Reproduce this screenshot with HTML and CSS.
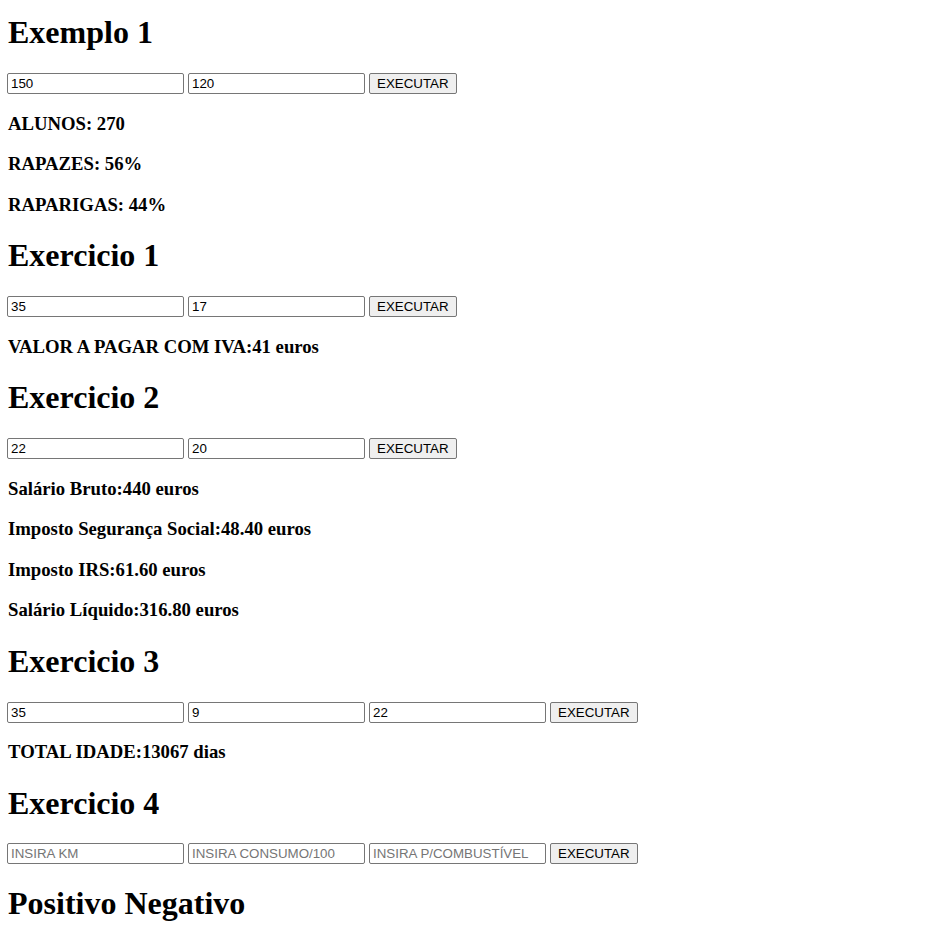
FILE: index.html
```html
<!DOCTYPE html>
<html lang="pt">
<head>
<meta charset="utf-8">
<title>Exercicios</title>
<link rel="stylesheet" href="styles.css">
</head>
<body>
  <section class="block">
    <h1 class="title first">Exemplo 1</h1>
    <div class="row">
      <input class="field" type="text" value="150">
      <input class="field" type="text" value="120">
      <button class="btn" type="button">EXECUTAR</button>
    </div>
    <div class="results">
      <h3 class="result">ALUNOS: 270</h3>
      <h3 class="result">RAPAZES: 56%</h3>
      <h3 class="result">RAPARIGAS: 44%</h3>
    </div>
  </section>

  <section class="block">
    <h1 class="title">Exercicio 1</h1>
    <div class="row">
      <input class="field" type="text" value="35">
      <input class="field" type="text" value="17">
      <button class="btn" type="button">EXECUTAR</button>
    </div>
    <div class="results">
      <h3 class="result">VALOR A PAGAR COM IVA:41 euros</h3>
    </div>
  </section>

  <section class="block">
    <h1 class="title">Exercicio 2</h1>
    <div class="row">
      <input class="field" type="text" value="22">
      <input class="field" type="text" value="20">
      <button class="btn" type="button">EXECUTAR</button>
    </div>
    <div class="results">
      <h3 class="result">Salário Bruto:440 euros</h3>
      <h3 class="result">Imposto Segurança Social:48.40 euros</h3>
      <h3 class="result">Imposto IRS:61.60 euros</h3>
      <h3 class="result">Salário Líquido:316.80 euros</h3>
    </div>
  </section>

  <section class="block">
    <h1 class="title">Exercicio 3</h1>
    <div class="row">
      <input class="field" type="text" value="35">
      <input class="field" type="text" value="9">
      <input class="field" type="text" value="22">
      <button class="btn" type="button">EXECUTAR</button>
    </div>
    <div class="results">
      <h3 class="result">TOTAL IDADE:13067 dias</h3>
    </div>
  </section>

  <section class="block">
    <h1 class="title">Exercicio 4</h1>
    <div class="row">
      <input class="field" type="text" placeholder="INSIRA KM">
      <input class="field" type="text" placeholder="INSIRA CONSUMO/100">
      <input class="field" type="text" placeholder="INSIRA P/COMBUSTÍVEL">
      <button class="btn" type="button">EXECUTAR</button>
    </div>
  </section>

  <section class="block">
    <h1 class="title last">Positivo Negativo</h1>
  </section>
</body>
</html>
```

FILE: styles.css
```css
html, body {
  background: #ffffff;
}

body {
  margin: 0 8px 0 7px;
  padding: 0;
  font-family: "Liberation Serif", "Times New Roman", serif;
  font-size: 16px;
  color: #000000;
}

.block {
  display: block;
}

.title {
  font-family: "Liberation Serif", "Times New Roman", serif;
  font-size: 32px;
  font-weight: bold;
  line-height: normal;
  margin: 21.7px 0 21.6px 1px;
}

.title.first {
  margin-top: 14.4px;
}

.title.last {
  margin-top: 21px;
}

.row {
  display: flex;
  align-items: flex-start;
  gap: 4px;
  height: 21px;
}

.field {
  box-sizing: border-box;
  width: 177px;
  height: 21px;
  margin: 0;
  padding: 1px 3px;
  border: 1px solid #767676;
  border-radius: 2px;
  background: #ffffff;
  color: #000000;
  font-family: "Liberation Sans", Arial, sans-serif;
  font-size: 13.333px;
  outline: none;
}

.field::placeholder {
  color: #757575;
  opacity: 1;
}

.btn {
  box-sizing: border-box;
  height: 21px;
  margin: 0;
  padding: 1px 7px;
  border: 1px solid #767676;
  border-radius: 2px;
  background: #efefef;
  color: #000000;
  font-family: "Liberation Sans", Arial, sans-serif;
  font-size: 13.333px;
  line-height: normal;
}

.results {
  display: block;
  padding-left: 1px;
}

.result {
  font-family: "Liberation Serif", "Times New Roman", serif;
  font-size: 18.72px;
  font-weight: bold;
  line-height: normal;
  margin: 18.6px 0;
}

.result:last-child {
  margin-bottom: 21.7px;
}
```
